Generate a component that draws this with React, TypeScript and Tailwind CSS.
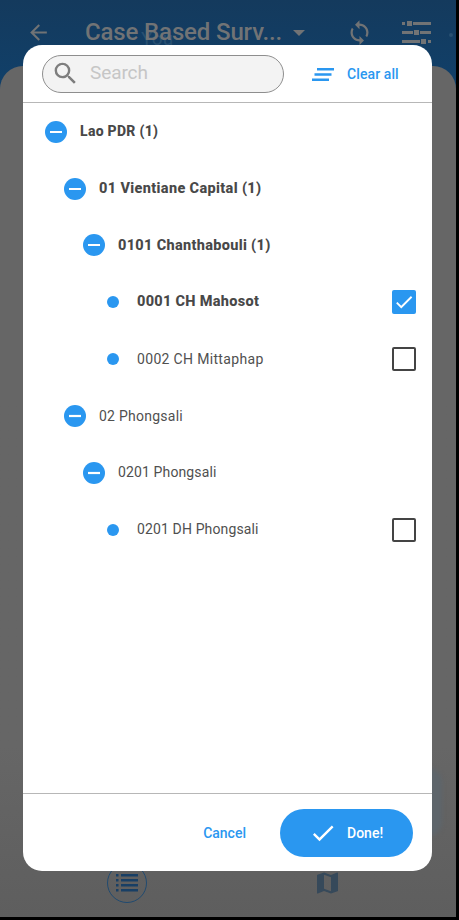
import React from "react";

type Row = { label: string; level: number; kind: "branch" | "leaf"; bold?: boolean; checked?: boolean; text: string };

const rows: Row[] = [
  { label: "Lao PDR (1)", level: 0, kind: "branch", bold: true, text: "text-[14px] tracking-[0.3px]" },
  { label: "01 Vientiane Capital (1)", level: 1, kind: "branch", bold: true, text: "text-[14.5px] tracking-[0.35px]" },
  { label: "0101 Chanthabouli (1)", level: 2, kind: "branch", bold: true, text: "text-[14.5px] tracking-[0.32px]" },
  { label: "0001 CH Mahosot", level: 3, kind: "leaf", bold: true, checked: true, text: "text-[14.5px] tracking-[0.3px]" },
  { label: "0002 CH Mittaphap", level: 3, kind: "leaf", text: "text-[14px] tracking-[0.33px]" },
  { label: "02 Phongsali", level: 1, kind: "branch", text: "text-[14px] tracking-[0.25px]" },
  { label: "0201 Phongsali", level: 2, kind: "branch", text: "text-[14px] tracking-[0.13px]" },
  { label: "0201 DH Phongsali", level: 3, kind: "leaf", text: "text-[14px] tracking-[0.13px]" },
];

const indents = ["pl-[22px]", "pl-[41px]", "pl-[60px]", "pl-[79px]"];

function Check({ className }: { className: string }) {
  return (
    <svg viewBox="0 0 24 24" className={className} fill="currentColor">
      <path d="M9 16.17 4.83 12l-1.42 1.41L9 19 21 7l-1.41-1.41z" />
    </svg>
  );
}

function TreeRow({ row }: { row: Row }) {
  return (
    <div className={`flex h-[56.9px] items-center pr-4 ${indents[row.level]}`}>
      <div className="flex w-[22px] shrink-0 justify-center">
        {row.kind === "branch" ? (
          <svg viewBox="0 0 22 22" className="h-[22px] w-[22px]">
            <circle cx="11" cy="11" r="11" fill="#2a97f0" />
            <path d="M5 9.9h12v2.2H5z" fill="white" />
          </svg>
        ) : (
          <div className="h-3 w-3 rounded-full bg-[#2a97f0]" />
        )}
      </div>
      <span className={`ml-[13px] flex-1 whitespace-nowrap ${row.text} ${row.bold ? "font-extrabold text-[#484848]" : "text-[#505050]"}`}>
        {row.label}
      </span>
      {row.kind === "leaf" &&
        (row.checked ? (
          <div className="flex h-6 w-6 items-center justify-center rounded-[2px] bg-[#2a97f0] text-white">
            <Check className="h-[22px] w-[22px]" />
          </div>
        ) : (
          <div className="h-6 w-6 rounded-[2px] border-2 border-[#444]" />
        ))}
    </div>
  );
}

export default function App() {
  return (
    <div className="relative h-[920px] w-[459px] overflow-hidden bg-black font-['Roboto',sans-serif]">
      <div className="flex h-[917px] w-[456px] flex-col overflow-hidden bg-linear-to-b from-[#143a5d] to-[#10406a] to-[90px]">
        <header className="relative flex h-[66px] shrink-0 items-center pb-[3px] text-[#717375]">
          <svg viewBox="0 0 24 24" className="ml-[26px] mt-[1px] h-[25px] w-[25px] fill-current">
            <path d="M20 11H7.83l5.59-5.59L12 4l-8 8 8 8 1.41-1.41L7.83 13H20z" />
          </svg>
          <span className="absolute left-[141px] top-[25px] text-[19px] text-[#285071]">You</span>
          <h1 className="relative ml-[34px] w-[198px] whitespace-nowrap text-[24px] font-medium tracking-[-0.14px]">Case Based Surv...</h1>
          <svg viewBox="0 0 12 6" className="ml-[10px] mt-[2px] h-[6px] w-3 fill-current"><path d="M0 0h12L6 6z" /></svg>
          <svg viewBox="0 0 24 24" className="ml-[41px] mt-[2px] h-[27px] w-[27px] fill-current">
            <path d="M12 4V1L8 5l4 4V6c3.31 0 6 2.69 6 6 0 1.01-.25 1.97-.7 2.8l1.46 1.46A7.93 7.93 0 0 0 20 12c0-4.42-3.58-8-8-8m0 14c-3.31 0-6-2.69-6-6 0-1.01.25-1.97.7-2.8L5.24 7.74A7.93 7.93 0 0 0 4 12c0 4.42 3.58 8 8 8v3l4-4-4-4z" />
          </svg>
          <svg viewBox="0 0 30 24" className="ml-[29px] mt-[1px] h-6 w-[30px] fill-current">
            <path d="M0 2h3v3H0zM5 1h5v5H5zM11 2h18v3H11zM0 11h11v3H0zM12 10h5v5h-5zM18 11h11v3H18zM0 20h18v3H0zM19 19h5v5h-5zM26 20h3v3h-3z" />
          </svg>
          <div className="ml-[17px] mt-[7px] h-1 w-1 rounded-full bg-[#285071]" />
        </header>
        <main className="relative flex-1 rounded-t-[23px] bg-linear-to-b from-[#666] from-80% to-[#5e5e5e]">
          <div className="absolute right-[14px] top-[702px] h-[68px] w-[60px] rounded-[14px] bg-[#5e656b] blur-[2px]" />
          <div className="absolute left-[107px] top-[797px] flex h-10 w-10 items-center justify-center rounded-full border border-[#204a70]">
            <svg viewBox="0 0 22 18" className="h-[18px] w-[22px] fill-[#183f65]">
              <path d="M0 0h2.5v2.5H0zM5 0h17v2.5H5zM0 5h2.5v2.5H0zM5 5h17v2.5H5zM0 10h2.5v2.5H0zM5 10h17v2.5H5zM0 15h2.5v2.5H0zM5 15h17v2.5H5z" />
            </svg>
          </div>
          <svg viewBox="3 3 18 18" className="absolute left-[317px] top-[806px] h-[22px] w-[21px] fill-[#36495a]">
            <path d="m20.5 3-.16.03L15 5.1 9 3 3.36 4.9c-.21.07-.36.25-.36.48V20.5c0 .28.22.5.5.5l.16-.03L9 18.9l6 2.1 5.64-1.9c.21-.07.36-.25.36-.48V3.5c0-.28-.22-.5-.5-.5M15 19l-6-2.11V5l6 2.11z" />
          </svg>
        </main>
      </div>
      <section className="absolute left-[23px] top-[45px] flex h-[826px] w-[409px] flex-col overflow-hidden rounded-[19px] bg-white">
        <div className="flex h-[58px] shrink-0 items-center border-b border-[#b7b7b7] pl-[19px]">
          <div className="flex h-[38px] w-[242px] items-center rounded-full border border-[#8e8e8e] bg-[#f3f3f3] pl-[8px]">
            <svg viewBox="0 0 24 24" className="h-[29px] w-[29px] fill-[#7e7e7e]">
              <path d="M15.5 14h-.79l-.28-.27A6.47 6.47 0 0 0 16 9.5 6.5 6.5 0 1 0 9.5 16c1.61 0 3.09-.59 4.23-1.57l.27.28v.79l5 4.99L20.49 19zm-6 0C7.01 14 5 11.99 5 9.5S7.01 5 9.5 5 14 7.01 14 9.5 11.99 14 9.5 14" />
            </svg>
            <span className="ml-[10px] text-[19px] tracking-[-0.4px] text-[#c6c6c6] w-[80px]"><span className="tracking-[-0.1px]">Search</span></span>
          </div>
          <div className="ml-[28px] flex items-center pt-[2px] text-[#2a97f0]">
            <svg viewBox="0 0 22 13" className="h-[13px] w-[22px] fill-current">
              <path d="M5 0h17v2.5H5zM2.5 5.2h17v2.5h-17zM0 10.4h17v2.5H0z" />
            </svg>
            <span className="ml-[13px] whitespace-nowrap text-[14px] font-medium tracking-[0.1px]">Clear all</span>
          </div>
        </div>
        <div className="flex-1 pt-[0.2px]">
          {rows.map((row) => <TreeRow key={row.label} row={row} />)}
        </div>
        <footer className="flex h-[78px] shrink-0 items-center justify-end border-t border-[#b7b7b7] pr-[19px]">
          <span className="pt-[2px] text-[14px] font-medium text-[#2a97f0]">Cancel</span>
          <div className="ml-[34px] flex h-12 w-[133px] items-center rounded-full bg-[#2a97f0] pl-[29px] text-white">
            <Check className="h-7 w-7" />
            <span className="ml-[10px] pt-[2px] text-[14px] font-medium">Done!</span>
          </div>
        </footer>
      </section>
    </div>
  );
}
